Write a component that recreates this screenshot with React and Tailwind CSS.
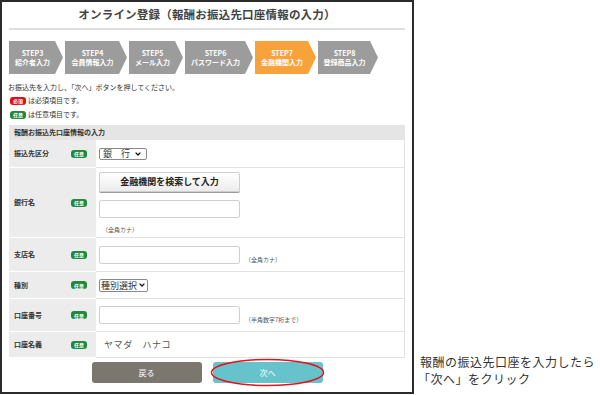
import React from "react";

const F = { fontFamily: '"Noto Sans CJK JP", "Noto Sans", sans-serif' };

function Step({ n, label, w, active }) {
  return (
    <div
      className={`${w} h-[33px] flex flex-col items-center justify-center pr-[7px] text-white font-bold leading-[9px] [clip-path:polygon(0_0,calc(100%_-_8px)_0,100%_50%,calc(100%_-_8px)_100%,0_100%)] ${
        active ? "bg-[#f8a23c]" : "bg-[#9c9c9c]"
      }`}
    >
      <div className="text-[7px]">STEP{n}</div>
      <div className="text-[7px] whitespace-nowrap">{label}</div>
    </div>
  );
}

function Badge({ red }) {
  return (
    <span
      className={`inline-flex items-center justify-center w-[16px] h-[8px] rounded-[3px] text-[5px] font-bold text-white leading-none ${
        red ? "bg-[#e50d12]" : "bg-[#1f8a3b]"
      }`}
    >
      {red ? "必須" : "任意"}
    </span>
  );
}

function Row({ label, h, children, last }) {
  return (
    <div className={`flex ${h}`}>
      <div className="w-[87px] bg-[#ececec] border-b border-white flex items-center pl-[5px]">
        <span className="w-[57px] text-[7px] font-bold text-[#333]">{label}</span>
        <Badge />
      </div>
      <div className="flex-1 border-b border-r border-[#e2e2e2] flex items-center pl-[3px]">
        {children}
      </div>
    </div>
  );
}

function Chevron() {
  return (
    <svg width="6" height="4" viewBox="0 0 6 4" className="shrink-0">
      <path d="M0.6 0.6 L3 3 L5.4 0.6" fill="none" stroke="#111" strokeWidth="1.3" />
    </svg>
  );
}

function Input() {
  return <div className="w-[141px] h-[18px] border border-[#cfcfcf] rounded-[2px] bg-white" />;
}

function Note({ children }) {
  return <span className="text-[6px] text-[#555] whitespace-nowrap">{children}</span>;
}

export default function App() {
  return (
    <div className="w-[600px] h-[395px] bg-white flex" style={F}>
      <div className="w-[414px] h-[394px] border-2 border-[#2b2b2b] flex flex-col px-[7px]">
        <div className="h-[26px] flex items-center justify-center text-[11.5px] font-bold text-[#444] tracking-[0.2px]">
          オンライン登録（報酬お振込先口座情報の入力）
        </div>
        <div className="h-[2px] bg-[#dedede]" />
        <div className="flex gap-[2px] mt-[11px]">
          <Step n={3} label="紹介者入力" w="w-[54px]" />
          <Step n={4} label="会員情報入力" w="w-[62px]" />
          <Step n={5} label="メール入力" w="w-[54px]" />
          <Step n={6} label="パスワード入力" w="w-[68px]" />
          <Step n={7} label="金融機関入力" w="w-[61px]" active />
          <Step n={8} label="登録商品入力" w="w-[60px]" />
        </div>
        <div className="mt-[7px] h-[13px] flex items-center -ml-[1px] text-[7px] text-[#333]">
          お振込先を入力し、「次へ」ボタンを押してください。
        </div>
        <div className="h-[13px] flex items-center gap-[2px] pl-[1px] text-[7px] text-[#333]">
          <Badge red />
          <span>は必須項目です。</span>
        </div>
        <div className="h-[15px] flex items-center gap-[2px] pl-[1px] text-[7px] text-[#333]">
          <Badge />
          <span>は任意項目です。</span>
        </div>
        <div className="mt-[3px] w-[396px]">
          <div className="h-[15px] bg-[#e5e5e5] flex items-center pl-[5px] text-[7px] font-bold text-[#333]">
            報酬お振込先口座情報の入力
          </div>
          <Row label="振込先区分" h="h-[28px]">
            <div className="w-[48px] h-[12px] border border-[#8a8a8a] rounded-[2px] flex items-center justify-between pl-[3px] pr-[5px] text-[9px] text-[#333] leading-none">
              <span>銀　行</span>
              <Chevron />
            </div>
          </Row>
          <Row label="銀行名" h="h-[70px]">
            <div className="flex flex-col">
              <div className="w-[141px] h-[20px] border border-[#cfcfcf] rounded-[2px] bg-gradient-to-b from-white to-[#ececec] shadow-[0_1px_0_#9a9a9a] flex items-center justify-center text-[9px] font-bold text-[#222]">
                金融機関を検索して入力
              </div>
              <div className="mt-[8px]">
                <Input />
              </div>
              <div className="mt-[3px] pl-[3px] leading-[9px]">
                <Note>（全角カナ）</Note>
              </div>
            </div>
          </Row>
          <Row label="支店名" h="h-[34px]">
            <Input />
            <span className="ml-[5px]">
              <Note>（全角カナ）</Note>
            </span>
          </Row>
          <Row label="種別" h="h-[27px]">
            <div className="w-[49px] h-[13px] border border-[#8a8a8a] rounded-[2px] flex items-center justify-between pl-[1px] pr-[2px] text-[9px] text-[#333] leading-none">
              <span>種別選択</span>
              <Chevron />
            </div>
          </Row>
          <Row label="口座番号" h="h-[33px]">
            <Input />
            <span className="ml-[5px]">
              <Note>（半角数字7桁まで）</Note>
            </span>
          </Row>
          <Row label="口座名義" h="h-[26px]">
            <span className="pl-[5px] text-[9px] text-[#555] tracking-[0.6px]">ヤマダ　ハナコ</span>
          </Row>
        </div>
        <div className="mt-[4px] flex justify-center gap-[11px]">
          <div className="w-[110px] h-[21px] rounded-[3px] bg-[#7b776f] flex items-center justify-center text-[8px] text-white">
            戻る
          </div>
          <div className="relative w-[110px] h-[21px] rounded-[3px] bg-[#66c3cc] flex items-center justify-center text-[8px] text-white">
            次へ
            <svg
              className="absolute left-[-3px] top-[-4px]"
              width="115"
              height="29"
              viewBox="0 0 115 29"
            >
              <ellipse cx="57.5" cy="14.5" rx="56" ry="13" fill="none" stroke="#e8101a" strokeWidth="1.5" />
            </svg>
          </div>
        </div>
      </div>
      <div className="pl-[6px] pt-[353px] text-[12px] text-[#333] leading-[17px] tracking-[0.5px] whitespace-nowrap">
        <div>報酬の振込先口座を入力したら</div>
        <div className="-ml-[2px]">「次へ」をクリック</div>
      </div>
    </div>
  );
}
